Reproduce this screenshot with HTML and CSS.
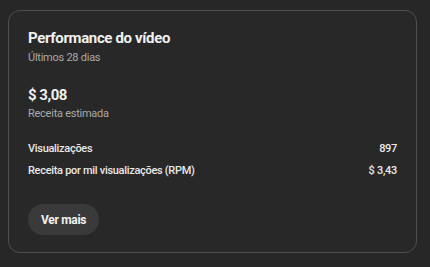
FILE: index.html
```html
<!DOCTYPE html>
<html lang="pt">
<head>
<meta charset="utf-8">
<link rel="stylesheet" href="styles.css">
</head>
<body>
<section class="card">
  <h2 class="title">Performance do vídeo</h2>
  <div class="sub">Últimos 28 dias</div>
  <div class="amount">$ 3,08</div>
  <div class="sub">Receita estimada</div>
  <div class="rows">
    <div class="row"><span>Visualizações</span><span>897</span></div>
    <div class="row"><span>Receita por mil visualizações (RPM)</span><span>$ 3,43</span></div>
  </div>
  <button class="more">Ver mais</button>
</section>
</body>
</html>
```

FILE: styles.css
```css
html, body {
  margin: 0;
  background: #272727;
}
body {
  padding: 10px 14px 15px 8px;
  font-family: Roboto, "Liberation Sans", sans-serif;
  color: #f1f1f1;
}
.card {
  box-sizing: border-box;
  width: 409px;
  height: 243px;
  border: 1px solid #4f4f4f;
  border-radius: 12px;
  background: #282828;
  padding: 16px 19px 0 19px;
  display: flex;
  flex-direction: column;
}
.title {
  margin: 0;
  font-size: 15px;
  line-height: 23px;
  font-weight: 700;
  letter-spacing: -0.35px;
}
.sub {
  font-size: 11px;
  line-height: 16px;
  color: #aaaaaa;
  letter-spacing: -0.25px;
}
.amount {
  margin-top: 18px;
  font-size: 15px;
  line-height: 22px;
  font-weight: 700;
  letter-spacing: -0.5px;
}
.rows {
  margin-top: 19px;
  display: flex;
  flex-direction: column;
  gap: 6px;
}
.row {
  display: flex;
  justify-content: space-between;
  font-size: 11px;
  line-height: 16px;
  font-weight: 500;
  color: #e8e8e8;
  letter-spacing: -0.3px;
}
.more {
  align-self: flex-start;
  margin-top: 25px;
  height: 31px;
  padding: 0 13px;
  border: none;
  border-radius: 16px;
  background: #3a3a3a;
  color: #f1f1f1;
  font-family: inherit;
  font-size: 12px;
  font-weight: 700;
  letter-spacing: -0.3px;
}
```
